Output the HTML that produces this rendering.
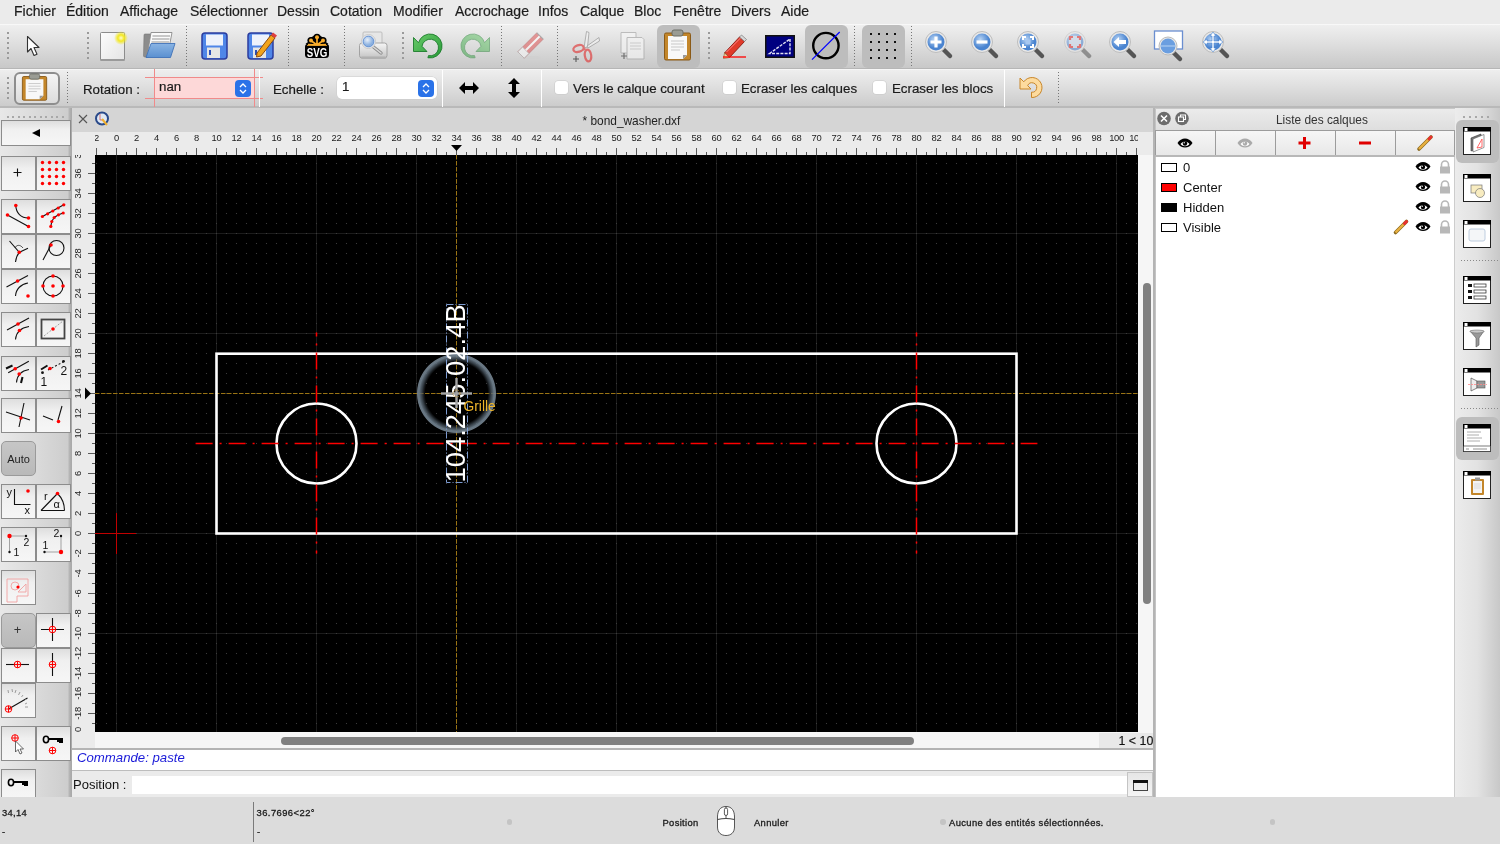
<!DOCTYPE html><html><head><meta charset="utf-8"><style>

*{box-sizing:border-box}
body{-webkit-font-smoothing:antialiased;margin:0;width:1500px;height:844px;position:relative;overflow:hidden;background:#ececec;font-family:"Liberation Sans",sans-serif;color:#222}
.a{position:absolute}
.menu span{position:absolute;top:3px;font-size:14px;color:#1c1c1c;white-space:nowrap;-webkit-text-stroke:.2px #1c1c1c}
.grip{position:absolute;width:2px;background:repeating-linear-gradient(#9a9a9a 0 2px,transparent 2px 5px)}
.sep{position:absolute;width:1px;background:repeating-linear-gradient(#777 0 1px,transparent 1px 3px)}
.lbtn{position:absolute;width:35px;height:35px;border:1px solid #9e9e9e;background:linear-gradient(#fafafa,#e6e6e6)}
.lbl{position:absolute;font-size:13.3px;color:#1a1a1a;white-space:nowrap;-webkit-text-stroke:.2px #1a1a1a}

</style></head><body><div id="root" style="position:absolute;left:0;top:0;width:1500px;height:844px;overflow:hidden;will-change:transform">
<div class="a menu" style="left:0;top:0;width:1500px;height:24px;background:#ebebeb">
<span style="left:14px">Fichier</span>
<span style="left:66px">Édition</span>
<span style="left:120px">Affichage</span>
<span style="left:190px">Sélectionner</span>
<span style="left:277px">Dessin</span>
<span style="left:330px">Cotation</span>
<span style="left:393px">Modifier</span>
<span style="left:455px">Accrochage</span>
<span style="left:538px">Infos</span>
<span style="left:580px">Calque</span>
<span style="left:634px">Bloc</span>
<span style="left:673px">Fenêtre</span>
<span style="left:731px">Divers</span>
<span style="left:781px">Aide</span>
</div>
<div class="a" style="left:0;top:24px;width:1500px;height:45px;background:linear-gradient(#efefef,#e4e4e4 30%,#c8c8c8);border-top:1px solid #f8f8f8;border-bottom:1px solid #b6b6b6"></div>
<div class="a" style="left:0;top:69px;width:1500px;height:39px;background:linear-gradient(#eeeeee,#e2e2e2 35%,#cacaca);border-top:1px solid #f6f6f6"></div><div class="a" style="left:0;top:106px;width:1500px;height:2px;background:#b9b9b9"></div>
<div class="grip" style="left:7px;top:32px;height:27px"></div><div class="grip" style="left:87px;top:32px;height:27px"></div><div class="grip" style="left:402px;top:32px;height:27px"></div><div class="grip" style="left:708px;top:32px;height:27px"></div><div class="sep" style="left:186px;top:26px;height:41px"></div><div class="sep" style="left:288px;top:26px;height:41px"></div><div class="sep" style="left:344px;top:26px;height:41px"></div><div class="sep" style="left:501px;top:26px;height:41px"></div><div class="sep" style="left:557px;top:26px;height:41px"></div><div class="sep" style="left:854px;top:26px;height:41px"></div><div class="sep" style="left:911px;top:26px;height:41px"></div><div class="a" style="left:657px;top:25px;width:43px;height:43px;border-radius:6px;background:#bdbdbd"></div><div class="a" style="left:805px;top:25px;width:43px;height:43px;border-radius:6px;background:#bdbdbd"></div><div class="a" style="left:862px;top:25px;width:43px;height:43px;border-radius:6px;background:#bdbdbd"></div><svg class="a" style="left:26px;top:35px;overflow:visible" width="16" height="23" viewBox="0 0 16 23"><path d="M1.5 1.5 L1.5 17 L5 13.5 L8 20.5 L11 19.2 L8 12.5 L13 12.5 Z" fill="#fff" stroke="#333" stroke-width="1.1" stroke-linejoin="round"/></svg><svg class="a" style="left:99px;top:31px;overflow:visible" width="30" height="31" viewBox="0 0 30 31"><defs><radialGradient id="glow"><stop offset="0" stop-color="#fffbd0"/><stop offset=".45" stop-color="#f3e820"/><stop offset="1" stop-color="#f3e820" stop-opacity="0"/></radialGradient><linearGradient id="pg" x1="0" y1="0" x2="1" y2="1"><stop offset="0" stop-color="#fdfdfd"/><stop offset="1" stop-color="#e4e4e4"/></linearGradient></defs><rect x="1.5" y="1.5" width="24" height="28" rx="1" fill="url(#pg)" stroke="#8c8c8c"/><rect x="1.5" y="28" width="24" height="2" fill="#9a9a9a"/><circle cx="22" cy="7" r="7" fill="url(#glow)"/></svg><svg class="a" style="left:142px;top:31px;overflow:visible" width="34" height="28" viewBox="0 0 34 28"><defs><linearGradient id="fg" x1="0" y1="0" x2="0" y2="1"><stop offset="0" stop-color="#8ab4e4"/><stop offset="1" stop-color="#5a90d0"/></linearGradient></defs><path d="M2 4 Q2 3 3 3 L10 3 L6 26 L3 26 Q1.5 26 1.5 25 Z" fill="#8c8c8c" stroke="#777" stroke-width=".6"/><path d="M9 1.5 L30 1.5 L27 17 L5 26 Z" fill="#fbfbfb" stroke="#8a8a8a" stroke-width=".9"/><path d="M10.5 5 L28 5 M10 8 L27.5 8 M9.5 11 L27 11" stroke="#b8b8b8" stroke-width="1.4"/><path d="M9 12.5 L33 12.5 L28.5 26.5 L4 26.5 Z" fill="url(#fg)" stroke="#3f72b8" stroke-width=".9" stroke-linejoin="round"/></svg><svg class="a" style="left:201px;top:32px;overflow:visible" width="28" height="28" viewBox="0 0 28 28"><rect x="1" y="1" width="25" height="26" rx="3" fill="#4f86e8" stroke="#2b3d9e" stroke-width="1.5"/><rect x="5" y="2.5" width="17" height="11" fill="#eef2fb"/><rect x="6" y="15.5" width="13" height="10.5" fill="#e6e6e6"/><rect x="8" y="18" width="2" height="5" fill="#2b4fb8"/></svg><svg class="a" style="left:247px;top:31px;overflow:visible" width="30" height="30" viewBox="0 0 30 30"><g transform="translate(0,1)"><rect x="1" y="1" width="25" height="26" rx="3" fill="#4f86e8" stroke="#2b3d9e" stroke-width="1.5"/><rect x="5" y="2.5" width="17" height="11" fill="#eef2fb"/><rect x="6" y="15.5" width="13" height="10.5" fill="#e6e6e6"/><rect x="8" y="18" width="2" height="5" fill="#2b4fb8"/></g><path d="M10 22 L24 4 L28 7 L14 25 L9.5 26 Z" fill="#f3a41c" stroke="#8a4a10" stroke-width="1"/><path d="M24 4 L26 1.5 L30 4.5 L28 7 Z" fill="#e04040"/></svg><svg class="a" style="left:304px;top:33px;overflow:visible" width="27" height="27" viewBox="0 0 27 27"><g fill="#000"><path d="M4 11 L6 5 L13 1 L20 5 L22 11 Z"/><circle cx="13" cy="4.3" r="3.6"/><circle cx="7" cy="7.5" r="3.6"/><circle cx="19" cy="7.5" r="3.6"/><path d="M1.5 11 Q3 8.5 7 9 L19 9 Q23 8.5 24.5 11 Z"/></g><rect x="1" y="10.5" width="24" height="14.5" rx="3.5" fill="#000"/><g fill="#f8ac2c" stroke="#f8ac2c"><circle cx="13" cy="4.3" r="2" stroke="none"/><circle cx="7" cy="7.5" r="2" stroke="none"/><circle cx="19" cy="7.5" r="2" stroke="none"/><path d="M13 12 L13 5 M13 12 L7.5 8 M13 12 L18.5 8 M13 12 L4 11.5 M13 12 L22 11.5" stroke-width="1.7" fill="none"/><path d="M3 12 Q13 10.5 23 12 L23 12.8 L3 12.8 Z" stroke="none"/></g><text x="0" y="0" transform="translate(13,24) scale(0.78,1)" text-anchor="middle" font-family="Liberation Sans" font-weight="bold" font-size="12.5" fill="#fff">SVG</text></svg><svg class="a" style="left:358px;top:31px;overflow:visible" width="31" height="30" viewBox="0 0 31 30"><defs><linearGradient id="prg" x1="0" y1="0" x2="0" y2="1"><stop offset="0" stop-color="#f6f6f6"/><stop offset="1" stop-color="#c4c4c4"/></linearGradient><radialGradient id="lens" cx=".4" cy=".35"><stop offset="0" stop-color="#e8f0fa"/><stop offset="1" stop-color="#8ab0e0"/></radialGradient></defs><rect x="5" y="1" width="19" height="14" rx="1" fill="#e6e6e6" stroke="#b4b4b4" stroke-width=".8"/><rect x="1.5" y="12" width="27.5" height="15" rx="2.5" fill="url(#prg)" stroke="#9c9c9c" stroke-width=".9"/><rect x="3" y="25.5" width="25" height="2.5" rx="1" fill="#b0b0b0"/><path d="M15.5 16 L23 22" stroke="#8c8c8c" stroke-width="3.4" stroke-linecap="round"/><path d="M15.5 16 L23 22" stroke="#d8d8d8" stroke-width="1.6" stroke-linecap="round"/><circle cx="10.5" cy="10.5" r="7" fill="#f0f0f0" stroke="#c8c8c8" stroke-width="1"/><circle cx="10.5" cy="10.5" r="5.4" fill="url(#lens)" stroke="#5a8ad0" stroke-width=".9"/></svg><svg class="a" style="left:412px;top:32px;overflow:visible" width="32" height="28" viewBox="0 0 32 28"><defs><linearGradient id="ug" x1="0" y1="0" x2="1" y2="1"><stop offset="0" stop-color="#6acb6a"/><stop offset="1" stop-color="#279a37"/></linearGradient></defs><path d="M1.5 5.5 L6.5 10.7 A12 12 0 1 1 15.9 25.8 L16.5 23.6 A8.3 8.3 0 1 0 10 14.3 L15 19.5 L1.5 19.5 Z" fill="url(#ug)" stroke="#1d7d2d" stroke-width="0.9" stroke-linejoin="round"/></svg><div class="a" style="left:459px;top:32px;width:32px;height:28px;opacity:.5;transform:scaleX(-1)"><svg class="a" style="left:0px;top:0px;overflow:visible" width="32" height="28" viewBox="0 0 32 28"><defs><linearGradient id="ug2" x1="0" y1="0" x2="1" y2="1"><stop offset="0" stop-color="#6acb6a"/><stop offset="1" stop-color="#279a37"/></linearGradient></defs><path d="M1.5 5.5 L6.5 10.7 A12 12 0 1 1 15.9 25.8 L16.5 23.6 A8.3 8.3 0 1 0 10 14.3 L15 19.5 L1.5 19.5 Z" fill="url(#ug2)" stroke="#1d7d2d" stroke-width="0.9" stroke-linejoin="round"/></svg></div><svg class="a" style="left:516px;top:32px;overflow:visible" width="30" height="28" viewBox="0 0 30 28"><g opacity="0.62"><ellipse cx="14" cy="25.5" rx="11" ry="1.6" fill="#cfcfcf"/><path d="M1.8 19.8 L20.8 0.8 L27.2 7.2 L8.2 26.2 Z" fill="#e06464" stroke="#b04848" stroke-width=".7" stroke-linejoin="round"/><path d="M1.8 19.8 L6.6 15.1 L12.9 21.4 L8.2 26.2 Z" fill="#f6f6f6" stroke="#9a9a9a" stroke-width=".7"/><path d="M9.8 18.2 L24 4" stroke="#fff" stroke-width="2"/><path d="M20.8 0.8 L27.2 7.2" stroke="#888" stroke-width="1.2"/></g></svg><svg class="a" style="left:571px;top:31px;overflow:visible" width="32" height="32" viewBox="0 0 32 32"><g opacity="0.62"><path d="M13 17 L15.5 0.5 L18 1.5 L16.5 16 Z" fill="#f4f4f4" stroke="#777" stroke-width=".8"/><path d="M16 15 L28 6.5 L28.5 10 L17 17 Z" fill="#f4f4f4" stroke="#777" stroke-width=".8"/><ellipse cx="7.5" cy="17.5" rx="5.3" ry="3.3" transform="rotate(-18 7.5 17.5)" fill="none" stroke="#e03030" stroke-width="2.2"/><ellipse cx="17" cy="24.5" rx="3.2" ry="6" transform="rotate(-8 17 24.5)" fill="none" stroke="#e03030" stroke-width="2.2"/><path d="M12 19 L14.5 17.5" stroke="#e03030" stroke-width="2"/><path d="M2 28 H8 M5 25 V31" stroke="#111" stroke-width="1.1"/></g></svg><svg class="a" style="left:616px;top:31px;overflow:visible" width="32" height="30" viewBox="0 0 32 30"><g opacity="0.55"><path d="M5 1.5 H20 V22 H5 Z" fill="#fafafa" stroke="#999"/><path d="M11 6.5 H26 L28 8.5 V28 H11 Z" fill="#fafafa" stroke="#999"/><path d="M14 12 H25 M14 15 H25 M14 18 H25" stroke="#bbb"/><path d="M5 25 H11 M8 22 V28" stroke="#222" stroke-width="1.2"/></g></svg><svg class="a" style="left:663px;top:29px;overflow:visible" width="30" height="33" viewBox="0 0 30 33"><rect x="1.5" y="4" width="26" height="27" rx="1.5" fill="#c3862a" stroke="#8a5a18"/><path d="M5 7 H24 V26 L20 30 H5 Z" fill="#f8f8f8"/><path d="M24 26 L20 30 L20 26 Z" fill="#999"/><rect x="9" y="1" width="11" height="6" rx="2" fill="#9a9c94" stroke="#6c6e66"/><path d="M8 12 H21 M8 15 H21 M8 18 H21 M8 21 H17" stroke="#c8c8c8"/></svg><svg class="a" style="left:722px;top:33px;overflow:visible" width="26" height="26" viewBox="0 0 26 26"><path d="M2.5 20 L17.5 4 L22.5 8.5 L7.5 24.5 Z" fill="#e03a2a" stroke="#8a1a10" stroke-width=".9" stroke-linejoin="round"/><path d="M4.5 19 L19 4.5" stroke="#f88" stroke-width="1"/><path d="M2.5 20 L7.5 24.5 L1.5 25.5 Z" fill="#f2cfa0" stroke="#8a5a20" stroke-width=".6"/><path d="M17.5 4 L19.5 2 L24.5 6.5 L22.5 8.5 Z" fill="#d8d8d8" stroke="#777" stroke-width=".7"/><path d="M1 24 H24" stroke="#f00" stroke-width="1.3"/></svg><svg class="a" style="left:765px;top:35px;overflow:visible" width="30" height="23" viewBox="0 0 30 23"><rect x=".75" y=".75" width="28.5" height="21.5" fill="#000080" stroke="#111" stroke-width="1.5"/><path d="M4.5 18.5 L25 4 L25 18.5 Z" fill="none" stroke="#e0e0f0" stroke-width="1.4" stroke-dasharray="3 1.2"/></svg><svg class="a" style="left:810px;top:30px;overflow:visible" width="34" height="32" viewBox="0 0 34 32"><circle cx="15.9" cy="15.6" r="12.7" fill="none" stroke="#000" stroke-width="2.4"/><path d="M2 29.7 L29.7 2" stroke="#00f" stroke-width="1.2"/></svg><svg class="a" style="left:870px;top:33px;overflow:visible" width="28" height="28" viewBox="0 0 28 28"><rect x="0" y="0" width="2" height="2" fill="#111"/><rect x="0" y="8" width="2" height="2" fill="#111"/><rect x="0" y="16" width="2" height="2" fill="#111"/><rect x="0" y="24" width="2" height="2" fill="#111"/><rect x="8" y="0" width="2" height="2" fill="#111"/><rect x="8" y="8" width="2" height="2" fill="#111"/><rect x="8" y="16" width="2" height="2" fill="#111"/><rect x="8" y="24" width="2" height="2" fill="#111"/><rect x="16" y="0" width="2" height="2" fill="#111"/><rect x="16" y="8" width="2" height="2" fill="#111"/><rect x="16" y="16" width="2" height="2" fill="#111"/><rect x="16" y="24" width="2" height="2" fill="#111"/><rect x="24" y="0" width="2" height="2" fill="#111"/><rect x="24" y="8" width="2" height="2" fill="#111"/><rect x="24" y="16" width="2" height="2" fill="#111"/><rect x="24" y="24" width="2" height="2" fill="#111"/></svg><svg class="a" style="left:924px;top:30px;overflow:visible" width="32" height="32" viewBox="0 0 32 32"><defs><radialGradient id="mg936" cx=".4" cy=".35"><stop offset="0" stop-color="#b8d4f4"/><stop offset="1" stop-color="#4a84d0"/></radialGradient></defs><path d="M18 18 L26 26" stroke="#555" stroke-width="4.5" stroke-linecap="round"/><circle cx="12" cy="12" r="10.5" fill="#e8e8e8" stroke="#bdbdbd" stroke-width="1"/><circle cx="12" cy="12" r="8.5" fill="url(#mg936)"/><path d="M12 6.5 V17.5 M6.5 12 H17.5" stroke="#fff" stroke-width="3.2"/></svg><svg class="a" style="left:970px;top:30px;overflow:visible" width="32" height="32" viewBox="0 0 32 32"><defs><radialGradient id="mg982" cx=".4" cy=".35"><stop offset="0" stop-color="#b8d4f4"/><stop offset="1" stop-color="#4a84d0"/></radialGradient></defs><path d="M18 18 L26 26" stroke="#555" stroke-width="4.5" stroke-linecap="round"/><circle cx="12" cy="12" r="10.5" fill="#e8e8e8" stroke="#bdbdbd" stroke-width="1"/><circle cx="12" cy="12" r="8.5" fill="url(#mg982)"/><path d="M6.5 12 H17.5" stroke="#fff" stroke-width="3.2"/></svg><svg class="a" style="left:1016px;top:30px;overflow:visible" width="32" height="32" viewBox="0 0 32 32"><defs><radialGradient id="mg1028" cx=".4" cy=".35"><stop offset="0" stop-color="#b8d4f4"/><stop offset="1" stop-color="#4a84d0"/></radialGradient></defs><path d="M18 18 L26 26" stroke="#555" stroke-width="4.5" stroke-linecap="round"/><circle cx="12" cy="12" r="10.5" fill="#e8e8e8" stroke="#bdbdbd" stroke-width="1"/><circle cx="12" cy="12" r="8.5" fill="url(#mg1028)"/><path d="M7 10 V7 H10 M14 7 H17 V10 M17 14 V17 H14 M10 17 H7 V14" fill="none" stroke="#fff" stroke-width="2"/><rect x="9.5" y="9.5" width="5" height="5" fill="#a8c8f0"/></svg><div class="a" style="left:1063px;top:30px;width:32px;height:32px;opacity:.55"><svg class="a" style="left:0px;top:0px;overflow:visible" width="32" height="32" viewBox="0 0 32 32"><defs><radialGradient id="mg12" cx=".4" cy=".35"><stop offset="0" stop-color="#b8d4f4"/><stop offset="1" stop-color="#4a84d0"/></radialGradient></defs><path d="M18 18 L26 26" stroke="#555" stroke-width="4.5" stroke-linecap="round"/><circle cx="12" cy="12" r="10.5" fill="#e8e8e8" stroke="#bdbdbd" stroke-width="1"/><circle cx="12" cy="12" r="8.5" fill="url(#mg12)"/><rect x="6" y="6" width="12" height="12" fill="#c8d8ee"/><path d="M7 10 V7 H10 M14 7 H17 V10 M17 14 V17 H14 M10 17 H7 V14" fill="none" stroke="#e02020" stroke-width="2.2"/></svg></div><svg class="a" style="left:1108px;top:30px;overflow:visible" width="32" height="32" viewBox="0 0 32 32"><defs><radialGradient id="mg1120" cx=".4" cy=".35"><stop offset="0" stop-color="#b8d4f4"/><stop offset="1" stop-color="#4a84d0"/></radialGradient></defs><path d="M18 18 L26 26" stroke="#555" stroke-width="4.5" stroke-linecap="round"/><circle cx="12" cy="12" r="10.5" fill="#e8e8e8" stroke="#bdbdbd" stroke-width="1"/><circle cx="12" cy="12" r="8.5" fill="url(#mg1120)"/><path d="M5.5 12 L11 7 V10 H18 V14 H11 V17 Z" fill="#fff"/></svg><svg class="a" style="left:1153px;top:30px;overflow:visible" width="32" height="32" viewBox="0 0 32 32"><rect x="1.5" y="1" width="28" height="18" fill="#fff" stroke="#6a8ed0" stroke-width="1.3"/><path d="M20 22 L27 29" stroke="#555" stroke-width="4.5" stroke-linecap="round"/><circle cx="15" cy="16" r="9" fill="#e8e8e8" stroke="#bbb"/><circle cx="15" cy="16" r="7.5" fill="#6a9ee0"/><path d="M8 16 H22" stroke="#b8d4f4" stroke-width="1"/></svg><svg class="a" style="left:1201px;top:30px;overflow:visible" width="32" height="32" viewBox="0 0 32 32"><defs><radialGradient id="mg1213" cx=".4" cy=".35"><stop offset="0" stop-color="#b8d4f4"/><stop offset="1" stop-color="#4a84d0"/></radialGradient></defs><path d="M18 18 L26 26" stroke="#555" stroke-width="4.5" stroke-linecap="round"/><circle cx="12" cy="12" r="10.5" fill="#e8e8e8" stroke="#bdbdbd" stroke-width="1"/><circle cx="12" cy="12" r="8.5" fill="url(#mg1213)"/><path d="M12 2 L15 6 H13 V11 H18 V9 L22 12 L18 15 V13 H13 V18 H15 L12 22 L9 18 H11 V13 H6 V15 L2 12 L6 9 V11 H11 V6 H9 Z" fill="#fff" stroke="#4a84d0" stroke-width=".6"/></svg>
<div class="grip" style="left:7px;top:77px;height:24px"></div><div class="sep" style="left:67px;top:72px;height:33px"></div><div class="sep" style="left:1058px;top:72px;height:33px"></div><div class="a" style="left:14px;top:72px;width:46px;height:33px;border:2px solid #8e8e8e;border-radius:6px;background:linear-gradient(#f4f4f4,#dcdcdc)"></div><svg class="a" style="left:21px;top:73px;overflow:visible" width="28" height="29" preserveAspectRatio="none" viewBox="0 0 30 33"><rect x="1.5" y="4" width="26" height="27" rx="1.5" fill="#c3862a" stroke="#8a5a18"/><path d="M5 7 H24 V26 L20 30 H5 Z" fill="#f8f8f8"/><path d="M24 26 L20 30 L20 26 Z" fill="#999"/><rect x="9" y="1" width="11" height="6" rx="2" fill="#9a9c94" stroke="#6c6e66"/><path d="M8 12 H21 M8 15 H21 M8 18 H21 M8 21 H17" stroke="#c8c8c8"/></svg><div class="lbl" style="left:83px;top:81.8px">Rotation :</div><div class="a" style="left:154px;top:77px;width:101px;height:22px;border-radius:5px;background:#fdd8d8"></div><div class="a" style="left:145px;top:77px;width:118px;height:1px;background:#f08a8a"></div><div class="a" style="left:145px;top:98px;width:118px;height:1px;background:#f08a8a"></div><div class="a" style="left:154px;top:69px;width:1px;height:38px;background:#f08a8a"></div><div class="a" style="left:254px;top:69px;width:1px;height:38px;background:#f08a8a"></div><div class="lbl" style="left:159px;top:79px">nan</div><div class="a" style="left:235px;top:80px;width:16px;height:17px;border-radius:4px;background:#2a72e8"></div><svg class="a" style="left:235px;top:80px;overflow:visible" width="16" height="17" viewBox="0 0 16 17"><path d="M5 7 L8 4 L11 7 M5 10 L8 13 L11 10" fill="none" stroke="#fff" stroke-width="1.3"/></svg><div class="a" style="left:259px;top:70px;width:1px;height:37px;background:#fff"></div><div class="lbl" style="left:273px;top:81.8px">Echelle :</div><div class="a" style="left:337px;top:77px;width:100px;height:22px;border-radius:5px;background:#fff;box-shadow:0 0 0 .5px #ccc"></div><div class="lbl" style="left:342px;top:79px">1</div><div class="a" style="left:418px;top:80px;width:16px;height:17px;border-radius:4px;background:#2a72e8"></div><svg class="a" style="left:418px;top:80px;overflow:visible" width="16" height="17" viewBox="0 0 16 17"><path d="M5 7 L8 4 L11 7 M5 10 L8 13 L11 10" fill="none" stroke="#fff" stroke-width="1.3"/></svg><div class="a" style="left:442px;top:70px;width:1px;height:37px;background:#fff"></div><svg class="a" style="left:458px;top:80px;overflow:visible" width="22" height="16" viewBox="0 0 22 16"><path d="M1 8 L7 2 V6 H15 V2 L21 8 L15 14 V10 H7 V14 Z" fill="#000"/></svg><svg class="a" style="left:506px;top:77px;overflow:visible" width="16" height="22" viewBox="0 0 16 22"><path d="M8 1 L14 7 H10 V15 H14 L8 21 L2 15 H6 V7 H2 Z" fill="#000"/></svg><div class="a" style="left:541px;top:70px;width:1px;height:37px;background:#fff"></div><div class="a" style="left:555px;top:81px;width:13px;height:13px;border-radius:3px;background:#fff;box-shadow:0 0 0 .5px #c8c8c8"></div><div class="lbl" style="left:573px;top:80.5px">Vers le calque courant</div><div class="a" style="left:723px;top:81px;width:13px;height:13px;border-radius:3px;background:#fff;box-shadow:0 0 0 .5px #c8c8c8"></div><div class="lbl" style="left:741px;top:80.5px">Ecraser les calques</div><div class="a" style="left:873px;top:81px;width:13px;height:13px;border-radius:3px;background:#fff;box-shadow:0 0 0 .5px #c8c8c8"></div><div class="lbl" style="left:892px;top:80.5px">Ecraser les blocs</div><div class="a" style="left:1004px;top:70px;width:1px;height:37px;background:#fff"></div><svg class="a" style="left:1017px;top:75px;overflow:visible" width="28" height="26" viewBox="0 0 28 26"><path d="M3 3 L6.79 6.79 A10 10 0 1 1 14.5 22.5 L14.5 17.17 A4.7 4.7 0 1 0 10.67 10.67 L14 14 L3 14 Z" fill="#fddb9e" stroke="#c8862a" stroke-width="1" stroke-linejoin="round"/></svg>
<div class="a" style="left:0;top:108px;width:72px;height:689px;background:linear-gradient(90deg,#e8e8e8 0,#dcdcdc 45%,#cdcdcd 94%,#b0b0b0 97%,#a8a8a8 100%)"></div>
<div class="a" style="left:7px;top:116px;width:57px;height:2px;background:repeating-linear-gradient(90deg,#a8a8a8 0 2px,transparent 2px 5.5px)"></div><div class="a" style="left:1px;top:120px;width:70px;height:26px;border:1px solid #8c8c8c;background:linear-gradient(#dedede 0,#f0f0f0 35%,#f6f6f6 100%)"></div><div class="a" style="left:1px;top:156px;width:35px;height:35px;border:1px solid #8c8c8c;background:linear-gradient(#dedede 0,#f0f0f0 35%,#f6f6f6 100%)"></div><div class="a" style="left:36px;top:156px;width:35px;height:35px;border:1px solid #8c8c8c;background:linear-gradient(#dedede 0,#f0f0f0 35%,#f6f6f6 100%)"></div><div class="a" style="left:1px;top:199px;width:35px;height:35px;border:1px solid #8c8c8c;background:linear-gradient(#dedede 0,#f0f0f0 35%,#f6f6f6 100%)"></div><div class="a" style="left:36px;top:199px;width:35px;height:35px;border:1px solid #8c8c8c;background:linear-gradient(#dedede 0,#f0f0f0 35%,#f6f6f6 100%)"></div><div class="a" style="left:1px;top:234px;width:35px;height:35px;border:1px solid #8c8c8c;background:linear-gradient(#dedede 0,#f0f0f0 35%,#f6f6f6 100%)"></div><div class="a" style="left:36px;top:234px;width:35px;height:35px;border:1px solid #8c8c8c;background:linear-gradient(#dedede 0,#f0f0f0 35%,#f6f6f6 100%)"></div><div class="a" style="left:1px;top:269px;width:35px;height:35px;border:1px solid #8c8c8c;background:linear-gradient(#dedede 0,#f0f0f0 35%,#f6f6f6 100%)"></div><div class="a" style="left:36px;top:269px;width:35px;height:35px;border:1px solid #8c8c8c;background:linear-gradient(#dedede 0,#f0f0f0 35%,#f6f6f6 100%)"></div><div class="a" style="left:1px;top:312px;width:35px;height:35px;border:1px solid #8c8c8c;background:linear-gradient(#dedede 0,#f0f0f0 35%,#f6f6f6 100%)"></div><div class="a" style="left:36px;top:312px;width:35px;height:35px;border:1px solid #8c8c8c;background:linear-gradient(#dedede 0,#f0f0f0 35%,#f6f6f6 100%)"></div><div class="a" style="left:1px;top:356px;width:35px;height:35px;border:1px solid #8c8c8c;background:linear-gradient(#dedede 0,#f0f0f0 35%,#f6f6f6 100%)"></div><div class="a" style="left:36px;top:356px;width:35px;height:35px;border:1px solid #8c8c8c;background:linear-gradient(#dedede 0,#f0f0f0 35%,#f6f6f6 100%)"></div><div class="a" style="left:1px;top:398px;width:35px;height:35px;border:1px solid #8c8c8c;background:linear-gradient(#dedede 0,#f0f0f0 35%,#f6f6f6 100%)"></div><div class="a" style="left:36px;top:398px;width:35px;height:35px;border:1px solid #8c8c8c;background:linear-gradient(#dedede 0,#f0f0f0 35%,#f6f6f6 100%)"></div><div class="a" style="left:1px;top:484px;width:35px;height:35px;border:1px solid #8c8c8c;background:linear-gradient(#dedede 0,#f0f0f0 35%,#f6f6f6 100%)"></div><div class="a" style="left:36px;top:484px;width:35px;height:35px;border:1px solid #8c8c8c;background:linear-gradient(#dedede 0,#f0f0f0 35%,#f6f6f6 100%)"></div><div class="a" style="left:1px;top:527px;width:35px;height:35px;border:1px solid #8c8c8c;background:linear-gradient(#dedede 0,#f0f0f0 35%,#f6f6f6 100%)"></div><div class="a" style="left:36px;top:527px;width:35px;height:35px;border:1px solid #8c8c8c;background:linear-gradient(#dedede 0,#f0f0f0 35%,#f6f6f6 100%)"></div><div class="a" style="left:1px;top:613px;width:35px;height:35px;border:1px solid #9a9a9a;border-radius:5px;background:linear-gradient(#c6c6c6,#b9b9b9)"></div><div class="a" style="left:36px;top:613px;width:35px;height:35px;border:1px solid #8c8c8c;background:linear-gradient(#dedede 0,#f0f0f0 35%,#f6f6f6 100%)"></div><div class="a" style="left:1px;top:648px;width:35px;height:35px;border:1px solid #8c8c8c;background:linear-gradient(#dedede 0,#f0f0f0 35%,#f6f6f6 100%)"></div><div class="a" style="left:36px;top:648px;width:35px;height:35px;border:1px solid #8c8c8c;background:linear-gradient(#dedede 0,#f0f0f0 35%,#f6f6f6 100%)"></div><div class="a" style="left:1px;top:726px;width:35px;height:35px;border:1px solid #8c8c8c;background:linear-gradient(#dedede 0,#f0f0f0 35%,#f6f6f6 100%)"></div><div class="a" style="left:36px;top:726px;width:35px;height:35px;border:1px solid #8c8c8c;background:linear-gradient(#dedede 0,#f0f0f0 35%,#f6f6f6 100%)"></div><div class="a" style="left:1px;top:441px;width:35px;height:35px;border:1px solid #9a9a9a;border-radius:5px;background:linear-gradient(#c6c6c6,#b9b9b9)"></div><div class="a" style="left:1px;top:570px;width:35px;height:35px;border:1px solid #8c8c8c;background:linear-gradient(#dedede 0,#f0f0f0 35%,#f6f6f6 100%)"></div><div class="a" style="left:1px;top:683px;width:35px;height:35px;border:1px solid #8c8c8c;background:linear-gradient(#dedede 0,#f0f0f0 35%,#f6f6f6 100%)"></div><div class="a" style="left:1px;top:769px;width:35px;height:30px;border:1px solid #8c8c8c;background:linear-gradient(#dedede 0,#f0f0f0 35%,#f6f6f6 100%)"></div>
<svg class="a" style="left:0;top:108px" width="72" height="689" viewBox="0 108 72 689"><g fill="none" stroke="#111" stroke-width="1.1"><path d="M32 133 L40 129 V137 Z" fill="#000" stroke="none"/><path d="M13.5 172.5 H21.5 M17.5 168.5 V176.5"/></g><circle cx="42.5" cy="162.5" r="1.7" fill="#f00"/><circle cx="42.5" cy="169.5" r="1.7" fill="#f00"/><circle cx="42.5" cy="176.5" r="1.7" fill="#f00"/><circle cx="42.5" cy="183.5" r="1.7" fill="#f00"/><circle cx="49.5" cy="162.5" r="1.7" fill="#f00"/><circle cx="49.5" cy="169.5" r="1.7" fill="#f00"/><circle cx="49.5" cy="176.5" r="1.7" fill="#f00"/><circle cx="49.5" cy="183.5" r="1.7" fill="#f00"/><circle cx="56.5" cy="162.5" r="1.7" fill="#f00"/><circle cx="56.5" cy="169.5" r="1.7" fill="#f00"/><circle cx="56.5" cy="176.5" r="1.7" fill="#f00"/><circle cx="56.5" cy="183.5" r="1.7" fill="#f00"/><circle cx="63.5" cy="162.5" r="1.7" fill="#f00"/><circle cx="63.5" cy="169.5" r="1.7" fill="#f00"/><circle cx="63.5" cy="176.5" r="1.7" fill="#f00"/><circle cx="63.5" cy="183.5" r="1.7" fill="#f00"/><g fill="none" stroke="#111" stroke-width="1.1"><path d="M7.5 215 L28.5 226.5"/><path d="M15.8 205.5 C16 213 21 218 28.5 218"/><path d="M42.5 216.5 L63.8 204.8 M50.8 226.4 L51.8 221.5 L54.2 217.5 L58.5 214.8 L63.2 213"/><path d="M9.5 241 L19.3 252.3 L28 248.3 M19.3 252.3 C17 255 16 258 15.5 262"/><path d="M15 248 C16 245 20 244 23 248" stroke-width=".7"/><circle cx="56.5" cy="248" r="7.5"/><path d="M43 260 L51 245"/><path d="M6.5 287 L28 275.5"/><path d="M15.5 296 C16 289 21 284 28 283"/><circle cx="53" cy="286" r="10"/><path d="M7 330 L29 318"/><path d="M15.5 339.5 C16 334 19 328 29 326.5"/><rect x="41.5" y="319.5" width="23" height="19" stroke="#444" stroke-width="1.8"/><path d="M44 336 L63 321" stroke="#888" stroke-width=".8" stroke-dasharray="2 1.5"/><path d="M8.2 372.7 L28.8 361.2"/><path d="M16.5 382.5 C17 376 20 371 29 369.5"/><path d="M6 368.5 L12.5 365.5" stroke-width="2"/><path d="M21 383 L22.5 377" stroke-width="2"/><path d="M48 370 L64 361.5" stroke-dasharray="2 2"/><path d="M41 369.5 L47.5 365.5" stroke-width="2"/></g><text x="40.5" y="385.5" font-family="Liberation Sans" font-size="12" fill="#111">1</text><text x="60.5" y="375" font-family="Liberation Sans" font-size="12" fill="#111">2</text><circle cx="63.5" cy="361.3" r="1.4" fill="#111"/><circle cx="42.5" cy="372.7" r="1.4" fill="#111"/><circle cx="15.8" cy="205.5" r="1.8" fill="#f00"/><circle cx="28.5" cy="218" r="1.8" fill="#f00"/><circle cx="7.5" cy="215" r="1.8" fill="#f00"/><circle cx="28.5" cy="226.5" r="1.8" fill="#f00"/><circle cx="42.4" cy="216.5" r="1.6" fill="#f00"/><circle cx="47.6" cy="213.8" r="1.6" fill="#f00"/><circle cx="52.8" cy="211" r="1.6" fill="#f00"/><circle cx="58.2" cy="208" r="1.6" fill="#f00"/><circle cx="63.8" cy="204.8" r="1.6" fill="#f00"/><circle cx="50.8" cy="226.4" r="1.6" fill="#f00"/><circle cx="51.8" cy="221.5" r="1.6" fill="#f00"/><circle cx="54.2" cy="217.5" r="1.6" fill="#f00"/><circle cx="58.5" cy="214.8" r="1.6" fill="#f00"/><circle cx="63.2" cy="213" r="1.6" fill="#f00"/><circle cx="19.3" cy="252.3" r="1.8" fill="#f00"/><circle cx="51" cy="245" r="1.8" fill="#f00"/><circle cx="17.6" cy="281" r="1.8" fill="#f00"/><circle cx="28" cy="296" r="1.8" fill="#f00"/><circle cx="53" cy="276" r="1.8" fill="#f00"/><circle cx="43" cy="286" r="1.8" fill="#f00"/><circle cx="63" cy="286" r="1.8" fill="#f00"/><circle cx="53" cy="296" r="1.8" fill="#f00"/><circle cx="53" cy="286" r="1.8" fill="#f00"/><circle cx="18" cy="324" r="1.8" fill="#f00"/><circle cx="19.5" cy="330.5" r="1.8" fill="#f00"/><circle cx="53" cy="329" r="1.8" fill="#f00"/><circle cx="15.2" cy="368.8" r="1.8" fill="#f00"/><circle cx="19.2" cy="374" r="1.8" fill="#f00"/><circle cx="50" cy="368.5" r="1.8" fill="#f00"/><g fill="none" stroke="#111" stroke-width="1.1"><path d="M6 412 L30 420 M19 427 L24 403"/><path d="M43 416 L53 420 M58 420 L62 406"/></g><circle cx="21" cy="418" r="1.8" fill="#f00"/><circle cx="58.5" cy="421.5" r="1.8" fill="#f00"/><text x="18.5" y="462.5" text-anchor="middle" font-family="Liberation Sans" font-size="11" fill="#222">Auto</text><g fill="none" stroke="#111" stroke-width="1.1"><path d="M14.5 489 V504.5 H30.5"/><path d="M41 510.5 L57.5 493.5 M41 510.5 H64.5 M57.5 493.5 C62 498 64.5 504 64.5 510.5"/></g><text x="6.5" y="496" font-family="Liberation Sans" font-size="11" fill="#111">y</text><text x="24.5" y="514" font-family="Liberation Sans" font-size="11" fill="#111">x</text><text x="44" y="500" font-family="Liberation Sans" font-size="11" fill="#111">r</text><text x="53.5" y="507.5" font-family="Liberation Sans" font-size="11" fill="#111">α</text><circle cx="28" cy="491" r="1.8" fill="#f00"/><circle cx="57.5" cy="493.5" r="1.8" fill="#f00"/><g fill="none" stroke="#999" stroke-width=".9"><path d="M9.5 552 V536 H26"/><path d="M44.5 552 H61 V536"/></g><text x="23.5" y="546" font-family="Liberation Sans" font-size="10.5" fill="#111">2</text><text x="13.5" y="555.5" font-family="Liberation Sans" font-size="10.5" fill="#111">1</text><text x="53.5" y="536.5" font-family="Liberation Sans" font-size="10.5" fill="#111">2</text><text x="42.5" y="549" font-family="Liberation Sans" font-size="10.5" fill="#111">1</text><circle cx="9.5" cy="536" r="2.2" fill="#f00"/><circle cx="26" cy="536" r="1.2" fill="#111"/><circle cx="9.5" cy="552" r="1.2" fill="#111"/><circle cx="61" cy="536" r="1.2" fill="#111"/><circle cx="44.5" cy="552" r="1.2" fill="#111"/><circle cx="61" cy="552" r="2.2" fill="#f00"/><g fill="none" stroke="#f2a0a0" stroke-width=".9"><path d="M7 579 H28 V596 H17 V602 H7 Z"/><circle cx="15" cy="586" r="4"/><path d="M18 592 L26 584 V592 Z"/></g><circle cx="18" cy="587" r="1.6" fill="#f00"/><text x="17.5" y="634" text-anchor="middle" font-family="Liberation Sans" font-size="13" fill="#333">+</text><g stroke="#111" stroke-width="1.1"><path d="M41 629.5 H64 M52.5 618 V641"/><path d="M6 664.5 H29"/><path d="M52.5 653 V676"/><path d="M8.5 709 L27.5 698"/></g><g stroke="#888" stroke-width=".8"><path d="M8 690 L8.5 693 M12 689 L12.5 692 M16 690 L15 693 M20 692 L18.5 695 M23 695 L21.5 697 M26 699 L24.5 700.5 M27 703 L25 704 M28 707 H25"/></g><circle cx="52.5" cy="629.5" r="3.3" fill="none" stroke="#f00" stroke-width="1"/><path d="M49.2 629.5 H55.8 M52.5 626.2 V632.8" stroke="#f00" stroke-width="1"/><circle cx="17.5" cy="664.5" r="3.3" fill="none" stroke="#f00" stroke-width="1"/><path d="M14.2 664.5 H20.8 M17.5 661.2 V667.8" stroke="#f00" stroke-width="1"/><circle cx="52.5" cy="664.5" r="3.3" fill="none" stroke="#f00" stroke-width="1"/><path d="M49.2 664.5 H55.8 M52.5 661.2 V667.8" stroke="#f00" stroke-width="1"/><circle cx="8.5" cy="709" r="3.3" fill="none" stroke="#f00" stroke-width="1"/><path d="M5.2 709 H11.8 M8.5 705.7 V712.3" stroke="#f00" stroke-width="1"/><circle cx="15" cy="738" r="3.3" fill="none" stroke="#f00" stroke-width="1"/><path d="M11.7 738 H18.3 M15 734.7 V741.3" stroke="#f00" stroke-width="1"/><path d="M15.5 741 V752 L18 749.5 L20 754 L22 753 L20 749 H23.5 Z" fill="#fff" stroke="#444" stroke-width=".8"/><g transform="translate(43,736)"><ellipse cx="3" cy="3.5" rx="2.6" ry="3.2" fill="none" stroke="#000" stroke-width="1.6"/><path d="M5.5 3 H19 V7 M15 3 V6 M17 3 V7" fill="none" stroke="#000" stroke-width="2"/></g><circle cx="52.5" cy="750.5" r="3.3" fill="none" stroke="#f00" stroke-width="1"/><path d="M49.2 750.5 H55.8 M52.5 747.2 V753.8" stroke="#f00" stroke-width="1"/><g transform="translate(8,779)"><ellipse cx="3" cy="3.5" rx="2.6" ry="3.2" fill="none" stroke="#000" stroke-width="1.6"/><path d="M5.5 3 H19 V7 M15 3 V6 M17 3 V7" fill="none" stroke="#000" stroke-width="2"/></g></svg>
<div class="a" style="left:72px;top:108px;width:1083px;height:24px;background:#d5d5d5"></div>
<div class="a" style="left:72px;top:132px;width:1081px;height:23px;background:#ebebeb"></div>
<div class="a" style="left:72px;top:155px;width:23px;height:577px;background:#ebebeb"></div>
<div class="a" style="left:95px;top:155px;width:1043px;height:577px;background:#000"></div>
<div class="a" style="left:1138px;top:155px;width:15px;height:577px;background:#f6f6f6"></div>
<div class="a" style="left:95px;top:732px;width:1058px;height:16px;background:#f6f6f6"></div>
<div class="a" style="left:72px;top:732px;width:23px;height:16px;background:#ebebeb"></div>
<div class="a" style="left:1153px;top:108px;width:2px;height:689px;background:#b4b4b4"></div>
<svg class="a" style="left:72px;top:132px" width="1081" height="600" viewBox="72 132 1081 600"><defs><clipPath id="ct"><rect x="95" y="132" width="1043" height="23"/></clipPath><clipPath id="cl"><rect x="72" y="155" width="23" height="577"/></clipPath></defs><g clip-path="url(#ct)"><line x1="96.5" y1="148" x2="96.5" y2="155" stroke="#5a5a5a"/><text x="96.5" y="141" text-anchor="middle" font-family="Liberation Sans" font-size="9.4" letter-spacing="-0.3" fill="#222">2</text><line x1="106.5" y1="152" x2="106.5" y2="155" stroke="#5a5a5a"/><line x1="116.5" y1="148" x2="116.5" y2="155" stroke="#5a5a5a"/><text x="116.5" y="141" text-anchor="middle" font-family="Liberation Sans" font-size="9.4" letter-spacing="-0.3" fill="#222">0</text><line x1="126.5" y1="152" x2="126.5" y2="155" stroke="#5a5a5a"/><line x1="136.5" y1="148" x2="136.5" y2="155" stroke="#5a5a5a"/><text x="136.5" y="141" text-anchor="middle" font-family="Liberation Sans" font-size="9.4" letter-spacing="-0.3" fill="#222">2</text><line x1="146.5" y1="152" x2="146.5" y2="155" stroke="#5a5a5a"/><line x1="156.5" y1="148" x2="156.5" y2="155" stroke="#5a5a5a"/><text x="156.5" y="141" text-anchor="middle" font-family="Liberation Sans" font-size="9.4" letter-spacing="-0.3" fill="#222">4</text><line x1="166.5" y1="152" x2="166.5" y2="155" stroke="#5a5a5a"/><line x1="176.5" y1="148" x2="176.5" y2="155" stroke="#5a5a5a"/><text x="176.5" y="141" text-anchor="middle" font-family="Liberation Sans" font-size="9.4" letter-spacing="-0.3" fill="#222">6</text><line x1="186.5" y1="152" x2="186.5" y2="155" stroke="#5a5a5a"/><line x1="196.5" y1="148" x2="196.5" y2="155" stroke="#5a5a5a"/><text x="196.5" y="141" text-anchor="middle" font-family="Liberation Sans" font-size="9.4" letter-spacing="-0.3" fill="#222">8</text><line x1="206.5" y1="152" x2="206.5" y2="155" stroke="#5a5a5a"/><line x1="216.5" y1="148" x2="216.5" y2="155" stroke="#5a5a5a"/><text x="216.5" y="141" text-anchor="middle" font-family="Liberation Sans" font-size="9.4" letter-spacing="-0.3" fill="#222">10</text><line x1="226.5" y1="152" x2="226.5" y2="155" stroke="#5a5a5a"/><line x1="236.5" y1="148" x2="236.5" y2="155" stroke="#5a5a5a"/><text x="236.5" y="141" text-anchor="middle" font-family="Liberation Sans" font-size="9.4" letter-spacing="-0.3" fill="#222">12</text><line x1="246.5" y1="152" x2="246.5" y2="155" stroke="#5a5a5a"/><line x1="256.5" y1="148" x2="256.5" y2="155" stroke="#5a5a5a"/><text x="256.5" y="141" text-anchor="middle" font-family="Liberation Sans" font-size="9.4" letter-spacing="-0.3" fill="#222">14</text><line x1="266.5" y1="152" x2="266.5" y2="155" stroke="#5a5a5a"/><line x1="276.5" y1="148" x2="276.5" y2="155" stroke="#5a5a5a"/><text x="276.5" y="141" text-anchor="middle" font-family="Liberation Sans" font-size="9.4" letter-spacing="-0.3" fill="#222">16</text><line x1="286.5" y1="152" x2="286.5" y2="155" stroke="#5a5a5a"/><line x1="296.5" y1="148" x2="296.5" y2="155" stroke="#5a5a5a"/><text x="296.5" y="141" text-anchor="middle" font-family="Liberation Sans" font-size="9.4" letter-spacing="-0.3" fill="#222">18</text><line x1="306.5" y1="152" x2="306.5" y2="155" stroke="#5a5a5a"/><line x1="316.5" y1="148" x2="316.5" y2="155" stroke="#5a5a5a"/><text x="316.5" y="141" text-anchor="middle" font-family="Liberation Sans" font-size="9.4" letter-spacing="-0.3" fill="#222">20</text><line x1="326.5" y1="152" x2="326.5" y2="155" stroke="#5a5a5a"/><line x1="336.5" y1="148" x2="336.5" y2="155" stroke="#5a5a5a"/><text x="336.5" y="141" text-anchor="middle" font-family="Liberation Sans" font-size="9.4" letter-spacing="-0.3" fill="#222">22</text><line x1="346.5" y1="152" x2="346.5" y2="155" stroke="#5a5a5a"/><line x1="356.5" y1="148" x2="356.5" y2="155" stroke="#5a5a5a"/><text x="356.5" y="141" text-anchor="middle" font-family="Liberation Sans" font-size="9.4" letter-spacing="-0.3" fill="#222">24</text><line x1="366.5" y1="152" x2="366.5" y2="155" stroke="#5a5a5a"/><line x1="376.5" y1="148" x2="376.5" y2="155" stroke="#5a5a5a"/><text x="376.5" y="141" text-anchor="middle" font-family="Liberation Sans" font-size="9.4" letter-spacing="-0.3" fill="#222">26</text><line x1="386.5" y1="152" x2="386.5" y2="155" stroke="#5a5a5a"/><line x1="396.5" y1="148" x2="396.5" y2="155" stroke="#5a5a5a"/><text x="396.5" y="141" text-anchor="middle" font-family="Liberation Sans" font-size="9.4" letter-spacing="-0.3" fill="#222">28</text><line x1="406.5" y1="152" x2="406.5" y2="155" stroke="#5a5a5a"/><line x1="416.5" y1="148" x2="416.5" y2="155" stroke="#5a5a5a"/><text x="416.5" y="141" text-anchor="middle" font-family="Liberation Sans" font-size="9.4" letter-spacing="-0.3" fill="#222">30</text><line x1="426.5" y1="152" x2="426.5" y2="155" stroke="#5a5a5a"/><line x1="436.5" y1="148" x2="436.5" y2="155" stroke="#5a5a5a"/><text x="436.5" y="141" text-anchor="middle" font-family="Liberation Sans" font-size="9.4" letter-spacing="-0.3" fill="#222">32</text><line x1="446.5" y1="152" x2="446.5" y2="155" stroke="#5a5a5a"/><line x1="456.5" y1="148" x2="456.5" y2="155" stroke="#5a5a5a"/><text x="456.5" y="141" text-anchor="middle" font-family="Liberation Sans" font-size="9.4" letter-spacing="-0.3" fill="#222">34</text><line x1="466.5" y1="152" x2="466.5" y2="155" stroke="#5a5a5a"/><line x1="476.5" y1="148" x2="476.5" y2="155" stroke="#5a5a5a"/><text x="476.5" y="141" text-anchor="middle" font-family="Liberation Sans" font-size="9.4" letter-spacing="-0.3" fill="#222">36</text><line x1="486.5" y1="152" x2="486.5" y2="155" stroke="#5a5a5a"/><line x1="496.5" y1="148" x2="496.5" y2="155" stroke="#5a5a5a"/><text x="496.5" y="141" text-anchor="middle" font-family="Liberation Sans" font-size="9.4" letter-spacing="-0.3" fill="#222">38</text><line x1="506.5" y1="152" x2="506.5" y2="155" stroke="#5a5a5a"/><line x1="516.5" y1="148" x2="516.5" y2="155" stroke="#5a5a5a"/><text x="516.5" y="141" text-anchor="middle" font-family="Liberation Sans" font-size="9.4" letter-spacing="-0.3" fill="#222">40</text><line x1="526.5" y1="152" x2="526.5" y2="155" stroke="#5a5a5a"/><line x1="536.5" y1="148" x2="536.5" y2="155" stroke="#5a5a5a"/><text x="536.5" y="141" text-anchor="middle" font-family="Liberation Sans" font-size="9.4" letter-spacing="-0.3" fill="#222">42</text><line x1="546.5" y1="152" x2="546.5" y2="155" stroke="#5a5a5a"/><line x1="556.5" y1="148" x2="556.5" y2="155" stroke="#5a5a5a"/><text x="556.5" y="141" text-anchor="middle" font-family="Liberation Sans" font-size="9.4" letter-spacing="-0.3" fill="#222">44</text><line x1="566.5" y1="152" x2="566.5" y2="155" stroke="#5a5a5a"/><line x1="576.5" y1="148" x2="576.5" y2="155" stroke="#5a5a5a"/><text x="576.5" y="141" text-anchor="middle" font-family="Liberation Sans" font-size="9.4" letter-spacing="-0.3" fill="#222">46</text><line x1="586.5" y1="152" x2="586.5" y2="155" stroke="#5a5a5a"/><line x1="596.5" y1="148" x2="596.5" y2="155" stroke="#5a5a5a"/><text x="596.5" y="141" text-anchor="middle" font-family="Liberation Sans" font-size="9.4" letter-spacing="-0.3" fill="#222">48</text><line x1="606.5" y1="152" x2="606.5" y2="155" stroke="#5a5a5a"/><line x1="616.5" y1="148" x2="616.5" y2="155" stroke="#5a5a5a"/><text x="616.5" y="141" text-anchor="middle" font-family="Liberation Sans" font-size="9.4" letter-spacing="-0.3" fill="#222">50</text><line x1="626.5" y1="152" x2="626.5" y2="155" stroke="#5a5a5a"/><line x1="636.5" y1="148" x2="636.5" y2="155" stroke="#5a5a5a"/><text x="636.5" y="141" text-anchor="middle" font-family="Liberation Sans" font-size="9.4" letter-spacing="-0.3" fill="#222">52</text><line x1="646.5" y1="152" x2="646.5" y2="155" stroke="#5a5a5a"/><line x1="656.5" y1="148" x2="656.5" y2="155" stroke="#5a5a5a"/><text x="656.5" y="141" text-anchor="middle" font-family="Liberation Sans" font-size="9.4" letter-spacing="-0.3" fill="#222">54</text><line x1="666.5" y1="152" x2="666.5" y2="155" stroke="#5a5a5a"/><line x1="676.5" y1="148" x2="676.5" y2="155" stroke="#5a5a5a"/><text x="676.5" y="141" text-anchor="middle" font-family="Liberation Sans" font-size="9.4" letter-spacing="-0.3" fill="#222">56</text><line x1="686.5" y1="152" x2="686.5" y2="155" stroke="#5a5a5a"/><line x1="696.5" y1="148" x2="696.5" y2="155" stroke="#5a5a5a"/><text x="696.5" y="141" text-anchor="middle" font-family="Liberation Sans" font-size="9.4" letter-spacing="-0.3" fill="#222">58</text><line x1="706.5" y1="152" x2="706.5" y2="155" stroke="#5a5a5a"/><line x1="716.5" y1="148" x2="716.5" y2="155" stroke="#5a5a5a"/><text x="716.5" y="141" text-anchor="middle" font-family="Liberation Sans" font-size="9.4" letter-spacing="-0.3" fill="#222">60</text><line x1="726.5" y1="152" x2="726.5" y2="155" stroke="#5a5a5a"/><line x1="736.5" y1="148" x2="736.5" y2="155" stroke="#5a5a5a"/><text x="736.5" y="141" text-anchor="middle" font-family="Liberation Sans" font-size="9.4" letter-spacing="-0.3" fill="#222">62</text><line x1="746.5" y1="152" x2="746.5" y2="155" stroke="#5a5a5a"/><line x1="756.5" y1="148" x2="756.5" y2="155" stroke="#5a5a5a"/><text x="756.5" y="141" text-anchor="middle" font-family="Liberation Sans" font-size="9.4" letter-spacing="-0.3" fill="#222">64</text><line x1="766.5" y1="152" x2="766.5" y2="155" stroke="#5a5a5a"/><line x1="776.5" y1="148" x2="776.5" y2="155" stroke="#5a5a5a"/><text x="776.5" y="141" text-anchor="middle" font-family="Liberation Sans" font-size="9.4" letter-spacing="-0.3" fill="#222">66</text><line x1="786.5" y1="152" x2="786.5" y2="155" stroke="#5a5a5a"/><line x1="796.5" y1="148" x2="796.5" y2="155" stroke="#5a5a5a"/><text x="796.5" y="141" text-anchor="middle" font-family="Liberation Sans" font-size="9.4" letter-spacing="-0.3" fill="#222">68</text><line x1="806.5" y1="152" x2="806.5" y2="155" stroke="#5a5a5a"/><line x1="816.5" y1="148" x2="816.5" y2="155" stroke="#5a5a5a"/><text x="816.5" y="141" text-anchor="middle" font-family="Liberation Sans" font-size="9.4" letter-spacing="-0.3" fill="#222">70</text><line x1="826.5" y1="152" x2="826.5" y2="155" stroke="#5a5a5a"/><line x1="836.5" y1="148" x2="836.5" y2="155" stroke="#5a5a5a"/><text x="836.5" y="141" text-anchor="middle" font-family="Liberation Sans" font-size="9.4" letter-spacing="-0.3" fill="#222">72</text><line x1="846.5" y1="152" x2="846.5" y2="155" stroke="#5a5a5a"/><line x1="856.5" y1="148" x2="856.5" y2="155" stroke="#5a5a5a"/><text x="856.5" y="141" text-anchor="middle" font-family="Liberation Sans" font-size="9.4" letter-spacing="-0.3" fill="#222">74</text><line x1="866.5" y1="152" x2="866.5" y2="155" stroke="#5a5a5a"/><line x1="876.5" y1="148" x2="876.5" y2="155" stroke="#5a5a5a"/><text x="876.5" y="141" text-anchor="middle" font-family="Liberation Sans" font-size="9.4" letter-spacing="-0.3" fill="#222">76</text><line x1="886.5" y1="152" x2="886.5" y2="155" stroke="#5a5a5a"/><line x1="896.5" y1="148" x2="896.5" y2="155" stroke="#5a5a5a"/><text x="896.5" y="141" text-anchor="middle" font-family="Liberation Sans" font-size="9.4" letter-spacing="-0.3" fill="#222">78</text><line x1="906.5" y1="152" x2="906.5" y2="155" stroke="#5a5a5a"/><line x1="916.5" y1="148" x2="916.5" y2="155" stroke="#5a5a5a"/><text x="916.5" y="141" text-anchor="middle" font-family="Liberation Sans" font-size="9.4" letter-spacing="-0.3" fill="#222">80</text><line x1="926.5" y1="152" x2="926.5" y2="155" stroke="#5a5a5a"/><line x1="936.5" y1="148" x2="936.5" y2="155" stroke="#5a5a5a"/><text x="936.5" y="141" text-anchor="middle" font-family="Liberation Sans" font-size="9.4" letter-spacing="-0.3" fill="#222">82</text><line x1="946.5" y1="152" x2="946.5" y2="155" stroke="#5a5a5a"/><line x1="956.5" y1="148" x2="956.5" y2="155" stroke="#5a5a5a"/><text x="956.5" y="141" text-anchor="middle" font-family="Liberation Sans" font-size="9.4" letter-spacing="-0.3" fill="#222">84</text><line x1="966.5" y1="152" x2="966.5" y2="155" stroke="#5a5a5a"/><line x1="976.5" y1="148" x2="976.5" y2="155" stroke="#5a5a5a"/><text x="976.5" y="141" text-anchor="middle" font-family="Liberation Sans" font-size="9.4" letter-spacing="-0.3" fill="#222">86</text><line x1="986.5" y1="152" x2="986.5" y2="155" stroke="#5a5a5a"/><line x1="996.5" y1="148" x2="996.5" y2="155" stroke="#5a5a5a"/><text x="996.5" y="141" text-anchor="middle" font-family="Liberation Sans" font-size="9.4" letter-spacing="-0.3" fill="#222">88</text><line x1="1006.5" y1="152" x2="1006.5" y2="155" stroke="#5a5a5a"/><line x1="1016.5" y1="148" x2="1016.5" y2="155" stroke="#5a5a5a"/><text x="1016.5" y="141" text-anchor="middle" font-family="Liberation Sans" font-size="9.4" letter-spacing="-0.3" fill="#222">90</text><line x1="1026.5" y1="152" x2="1026.5" y2="155" stroke="#5a5a5a"/><line x1="1036.5" y1="148" x2="1036.5" y2="155" stroke="#5a5a5a"/><text x="1036.5" y="141" text-anchor="middle" font-family="Liberation Sans" font-size="9.4" letter-spacing="-0.3" fill="#222">92</text><line x1="1046.5" y1="152" x2="1046.5" y2="155" stroke="#5a5a5a"/><line x1="1056.5" y1="148" x2="1056.5" y2="155" stroke="#5a5a5a"/><text x="1056.5" y="141" text-anchor="middle" font-family="Liberation Sans" font-size="9.4" letter-spacing="-0.3" fill="#222">94</text><line x1="1066.5" y1="152" x2="1066.5" y2="155" stroke="#5a5a5a"/><line x1="1076.5" y1="148" x2="1076.5" y2="155" stroke="#5a5a5a"/><text x="1076.5" y="141" text-anchor="middle" font-family="Liberation Sans" font-size="9.4" letter-spacing="-0.3" fill="#222">96</text><line x1="1086.5" y1="152" x2="1086.5" y2="155" stroke="#5a5a5a"/><line x1="1096.5" y1="148" x2="1096.5" y2="155" stroke="#5a5a5a"/><text x="1096.5" y="141" text-anchor="middle" font-family="Liberation Sans" font-size="9.4" letter-spacing="-0.3" fill="#222">98</text><line x1="1106.5" y1="152" x2="1106.5" y2="155" stroke="#5a5a5a"/><line x1="1116.5" y1="148" x2="1116.5" y2="155" stroke="#5a5a5a"/><text x="1116.5" y="141" text-anchor="middle" font-family="Liberation Sans" font-size="9.4" letter-spacing="-0.3" fill="#222">100</text><line x1="1126.5" y1="152" x2="1126.5" y2="155" stroke="#5a5a5a"/><line x1="1136.5" y1="148" x2="1136.5" y2="155" stroke="#5a5a5a"/><text x="1136.5" y="141" text-anchor="middle" font-family="Liberation Sans" font-size="9.4" letter-spacing="-0.3" fill="#222">102</text><line x1="1146.5" y1="152" x2="1146.5" y2="155" stroke="#5a5a5a"/></g><g clip-path="url(#cl)"><line x1="88" y1="733.5" x2="95" y2="733.5" stroke="#5a5a5a"/><text transform="translate(81,733.5) rotate(-90)" x="0" y="0" text-anchor="middle" font-family="Liberation Sans" font-size="9.4" letter-spacing="-0.3" fill="#222">-20</text><line x1="92" y1="723.5" x2="95" y2="723.5" stroke="#5a5a5a"/><line x1="88" y1="713.5" x2="95" y2="713.5" stroke="#5a5a5a"/><text transform="translate(81,713.5) rotate(-90)" x="0" y="0" text-anchor="middle" font-family="Liberation Sans" font-size="9.4" letter-spacing="-0.3" fill="#222">-18</text><line x1="92" y1="703.5" x2="95" y2="703.5" stroke="#5a5a5a"/><line x1="88" y1="693.5" x2="95" y2="693.5" stroke="#5a5a5a"/><text transform="translate(81,693.5) rotate(-90)" x="0" y="0" text-anchor="middle" font-family="Liberation Sans" font-size="9.4" letter-spacing="-0.3" fill="#222">-16</text><line x1="92" y1="683.5" x2="95" y2="683.5" stroke="#5a5a5a"/><line x1="88" y1="673.5" x2="95" y2="673.5" stroke="#5a5a5a"/><text transform="translate(81,673.5) rotate(-90)" x="0" y="0" text-anchor="middle" font-family="Liberation Sans" font-size="9.4" letter-spacing="-0.3" fill="#222">-14</text><line x1="92" y1="663.5" x2="95" y2="663.5" stroke="#5a5a5a"/><line x1="88" y1="653.5" x2="95" y2="653.5" stroke="#5a5a5a"/><text transform="translate(81,653.5) rotate(-90)" x="0" y="0" text-anchor="middle" font-family="Liberation Sans" font-size="9.4" letter-spacing="-0.3" fill="#222">-12</text><line x1="92" y1="643.5" x2="95" y2="643.5" stroke="#5a5a5a"/><line x1="88" y1="633.5" x2="95" y2="633.5" stroke="#5a5a5a"/><text transform="translate(81,633.5) rotate(-90)" x="0" y="0" text-anchor="middle" font-family="Liberation Sans" font-size="9.4" letter-spacing="-0.3" fill="#222">-10</text><line x1="92" y1="623.5" x2="95" y2="623.5" stroke="#5a5a5a"/><line x1="88" y1="613.5" x2="95" y2="613.5" stroke="#5a5a5a"/><text transform="translate(81,613.5) rotate(-90)" x="0" y="0" text-anchor="middle" font-family="Liberation Sans" font-size="9.4" letter-spacing="-0.3" fill="#222">-8</text><line x1="92" y1="603.5" x2="95" y2="603.5" stroke="#5a5a5a"/><line x1="88" y1="593.5" x2="95" y2="593.5" stroke="#5a5a5a"/><text transform="translate(81,593.5) rotate(-90)" x="0" y="0" text-anchor="middle" font-family="Liberation Sans" font-size="9.4" letter-spacing="-0.3" fill="#222">-6</text><line x1="92" y1="583.5" x2="95" y2="583.5" stroke="#5a5a5a"/><line x1="88" y1="573.5" x2="95" y2="573.5" stroke="#5a5a5a"/><text transform="translate(81,573.5) rotate(-90)" x="0" y="0" text-anchor="middle" font-family="Liberation Sans" font-size="9.4" letter-spacing="-0.3" fill="#222">-4</text><line x1="92" y1="563.5" x2="95" y2="563.5" stroke="#5a5a5a"/><line x1="88" y1="553.5" x2="95" y2="553.5" stroke="#5a5a5a"/><text transform="translate(81,553.5) rotate(-90)" x="0" y="0" text-anchor="middle" font-family="Liberation Sans" font-size="9.4" letter-spacing="-0.3" fill="#222">-2</text><line x1="92" y1="543.5" x2="95" y2="543.5" stroke="#5a5a5a"/><line x1="88" y1="533.5" x2="95" y2="533.5" stroke="#5a5a5a"/><text transform="translate(81,533.5) rotate(-90)" x="0" y="0" text-anchor="middle" font-family="Liberation Sans" font-size="9.4" letter-spacing="-0.3" fill="#222">0</text><line x1="92" y1="523.5" x2="95" y2="523.5" stroke="#5a5a5a"/><line x1="88" y1="513.5" x2="95" y2="513.5" stroke="#5a5a5a"/><text transform="translate(81,513.5) rotate(-90)" x="0" y="0" text-anchor="middle" font-family="Liberation Sans" font-size="9.4" letter-spacing="-0.3" fill="#222">2</text><line x1="92" y1="503.5" x2="95" y2="503.5" stroke="#5a5a5a"/><line x1="88" y1="493.5" x2="95" y2="493.5" stroke="#5a5a5a"/><text transform="translate(81,493.5) rotate(-90)" x="0" y="0" text-anchor="middle" font-family="Liberation Sans" font-size="9.4" letter-spacing="-0.3" fill="#222">4</text><line x1="92" y1="483.5" x2="95" y2="483.5" stroke="#5a5a5a"/><line x1="88" y1="473.5" x2="95" y2="473.5" stroke="#5a5a5a"/><text transform="translate(81,473.5) rotate(-90)" x="0" y="0" text-anchor="middle" font-family="Liberation Sans" font-size="9.4" letter-spacing="-0.3" fill="#222">6</text><line x1="92" y1="463.5" x2="95" y2="463.5" stroke="#5a5a5a"/><line x1="88" y1="453.5" x2="95" y2="453.5" stroke="#5a5a5a"/><text transform="translate(81,453.5) rotate(-90)" x="0" y="0" text-anchor="middle" font-family="Liberation Sans" font-size="9.4" letter-spacing="-0.3" fill="#222">8</text><line x1="92" y1="443.5" x2="95" y2="443.5" stroke="#5a5a5a"/><line x1="88" y1="433.5" x2="95" y2="433.5" stroke="#5a5a5a"/><text transform="translate(81,433.5) rotate(-90)" x="0" y="0" text-anchor="middle" font-family="Liberation Sans" font-size="9.4" letter-spacing="-0.3" fill="#222">10</text><line x1="92" y1="423.5" x2="95" y2="423.5" stroke="#5a5a5a"/><line x1="88" y1="413.5" x2="95" y2="413.5" stroke="#5a5a5a"/><text transform="translate(81,413.5) rotate(-90)" x="0" y="0" text-anchor="middle" font-family="Liberation Sans" font-size="9.4" letter-spacing="-0.3" fill="#222">12</text><line x1="92" y1="403.5" x2="95" y2="403.5" stroke="#5a5a5a"/><line x1="88" y1="393.5" x2="95" y2="393.5" stroke="#5a5a5a"/><text transform="translate(81,393.5) rotate(-90)" x="0" y="0" text-anchor="middle" font-family="Liberation Sans" font-size="9.4" letter-spacing="-0.3" fill="#222">14</text><line x1="92" y1="383.5" x2="95" y2="383.5" stroke="#5a5a5a"/><line x1="88" y1="373.5" x2="95" y2="373.5" stroke="#5a5a5a"/><text transform="translate(81,373.5) rotate(-90)" x="0" y="0" text-anchor="middle" font-family="Liberation Sans" font-size="9.4" letter-spacing="-0.3" fill="#222">16</text><line x1="92" y1="363.5" x2="95" y2="363.5" stroke="#5a5a5a"/><line x1="88" y1="353.5" x2="95" y2="353.5" stroke="#5a5a5a"/><text transform="translate(81,353.5) rotate(-90)" x="0" y="0" text-anchor="middle" font-family="Liberation Sans" font-size="9.4" letter-spacing="-0.3" fill="#222">18</text><line x1="92" y1="343.5" x2="95" y2="343.5" stroke="#5a5a5a"/><line x1="88" y1="333.5" x2="95" y2="333.5" stroke="#5a5a5a"/><text transform="translate(81,333.5) rotate(-90)" x="0" y="0" text-anchor="middle" font-family="Liberation Sans" font-size="9.4" letter-spacing="-0.3" fill="#222">20</text><line x1="92" y1="323.5" x2="95" y2="323.5" stroke="#5a5a5a"/><line x1="88" y1="313.5" x2="95" y2="313.5" stroke="#5a5a5a"/><text transform="translate(81,313.5) rotate(-90)" x="0" y="0" text-anchor="middle" font-family="Liberation Sans" font-size="9.4" letter-spacing="-0.3" fill="#222">22</text><line x1="92" y1="303.5" x2="95" y2="303.5" stroke="#5a5a5a"/><line x1="88" y1="293.5" x2="95" y2="293.5" stroke="#5a5a5a"/><text transform="translate(81,293.5) rotate(-90)" x="0" y="0" text-anchor="middle" font-family="Liberation Sans" font-size="9.4" letter-spacing="-0.3" fill="#222">24</text><line x1="92" y1="283.5" x2="95" y2="283.5" stroke="#5a5a5a"/><line x1="88" y1="273.5" x2="95" y2="273.5" stroke="#5a5a5a"/><text transform="translate(81,273.5) rotate(-90)" x="0" y="0" text-anchor="middle" font-family="Liberation Sans" font-size="9.4" letter-spacing="-0.3" fill="#222">26</text><line x1="92" y1="263.5" x2="95" y2="263.5" stroke="#5a5a5a"/><line x1="88" y1="253.5" x2="95" y2="253.5" stroke="#5a5a5a"/><text transform="translate(81,253.5) rotate(-90)" x="0" y="0" text-anchor="middle" font-family="Liberation Sans" font-size="9.4" letter-spacing="-0.3" fill="#222">28</text><line x1="92" y1="243.5" x2="95" y2="243.5" stroke="#5a5a5a"/><line x1="88" y1="233.5" x2="95" y2="233.5" stroke="#5a5a5a"/><text transform="translate(81,233.5) rotate(-90)" x="0" y="0" text-anchor="middle" font-family="Liberation Sans" font-size="9.4" letter-spacing="-0.3" fill="#222">30</text><line x1="92" y1="223.5" x2="95" y2="223.5" stroke="#5a5a5a"/><line x1="88" y1="213.5" x2="95" y2="213.5" stroke="#5a5a5a"/><text transform="translate(81,213.5) rotate(-90)" x="0" y="0" text-anchor="middle" font-family="Liberation Sans" font-size="9.4" letter-spacing="-0.3" fill="#222">32</text><line x1="92" y1="203.5" x2="95" y2="203.5" stroke="#5a5a5a"/><line x1="88" y1="193.5" x2="95" y2="193.5" stroke="#5a5a5a"/><text transform="translate(81,193.5) rotate(-90)" x="0" y="0" text-anchor="middle" font-family="Liberation Sans" font-size="9.4" letter-spacing="-0.3" fill="#222">34</text><line x1="92" y1="183.5" x2="95" y2="183.5" stroke="#5a5a5a"/><line x1="88" y1="173.5" x2="95" y2="173.5" stroke="#5a5a5a"/><text transform="translate(81,173.5) rotate(-90)" x="0" y="0" text-anchor="middle" font-family="Liberation Sans" font-size="9.4" letter-spacing="-0.3" fill="#222">36</text><line x1="92" y1="163.5" x2="95" y2="163.5" stroke="#5a5a5a"/><line x1="88" y1="153.5" x2="95" y2="153.5" stroke="#5a5a5a"/><text transform="translate(81,153.5) rotate(-90)" x="0" y="0" text-anchor="middle" font-family="Liberation Sans" font-size="9.4" letter-spacing="-0.3" fill="#222">38</text></g><path d="M451 145 L462 145 L456.5 151 Z" fill="#000"/><path d="M85 387.5 L85 399.5 L91 393.5 Z" fill="#000"/></svg>
<div class="a" style="left:582.5px;top:113.5px;font-size:11.9px;color:#222;white-space:nowrap">* bond_washer.dxf</div>
<svg class="a" style="left:95px;top:155px" width="1043" height="577" viewBox="95 155 1043 577"><defs><pattern id="dots" x="6" y="3" width="10" height="10" patternUnits="userSpaceOnUse"><rect x="0" y="0" width="1" height="1" fill="#3c3c3c"/></pattern></defs><rect x="95" y="155" width="1043" height="577" fill="#000"/><rect x="116" y="155" width="1" height="577" fill="#1c1c1c"/><rect x="216" y="155" width="1" height="577" fill="#1c1c1c"/><rect x="316" y="155" width="1" height="577" fill="#1c1c1c"/><rect x="416" y="155" width="1" height="577" fill="#1c1c1c"/><rect x="516" y="155" width="1" height="577" fill="#1c1c1c"/><rect x="616" y="155" width="1" height="577" fill="#1c1c1c"/><rect x="716" y="155" width="1" height="577" fill="#1c1c1c"/><rect x="816" y="155" width="1" height="577" fill="#1c1c1c"/><rect x="916" y="155" width="1" height="577" fill="#1c1c1c"/><rect x="1016" y="155" width="1" height="577" fill="#1c1c1c"/><rect x="1116" y="155" width="1" height="577" fill="#1c1c1c"/><rect x="95" y="233" width="1043" height="1" fill="#1c1c1c"/><rect x="95" y="333" width="1043" height="1" fill="#1c1c1c"/><rect x="95" y="433" width="1043" height="1" fill="#1c1c1c"/><rect x="95" y="533" width="1043" height="1" fill="#1c1c1c"/><rect x="95" y="633" width="1043" height="1" fill="#1c1c1c"/><rect x="95" y="155" width="1043" height="577" fill="url(#dots)"/><rect x="95" y="533" width="41" height="1" fill="#c00000"/><rect x="116" y="513" width="1" height="41" fill="#c00000"/><line x1="95" y1="393.5" x2="1138" y2="393.5" stroke="#9a7414" stroke-width="1" stroke-dasharray="4.5 1.5"/><line x1="456.5" y1="155" x2="456.5" y2="732" stroke="#9a7414" stroke-width="1" stroke-dasharray="4.5 1.5"/><rect x="216.5" y="353.7" width="800" height="179.8" fill="none" stroke="#fff" stroke-width="2.6"/><circle cx="316.5" cy="443.5" r="40" fill="none" stroke="#fff" stroke-width="2.6"/><circle cx="916.5" cy="443.5" r="40" fill="none" stroke="#fff" stroke-width="2.6"/><line x1="195.6" y1="443.5" x2="1037.4" y2="443.5" stroke="#f00" stroke-width="1.5" stroke-dasharray="17 7 2 7"/><line x1="316.5" y1="332.5" x2="316.5" y2="553.5" stroke="#f00" stroke-width="1.5" stroke-dasharray="17 7 2 7" stroke-dashoffset="13"/><line x1="916.5" y1="332.5" x2="916.5" y2="553.5" stroke="#f00" stroke-width="1.5" stroke-dasharray="17 7 2 7" stroke-dashoffset="13"/><defs><radialGradient id="snap" cx="456.5" cy="393.5" r="40" gradientUnits="userSpaceOnUse"><stop offset="0.78" stop-color="#3a444c" stop-opacity="0"/><stop offset="0.86" stop-color="#4c5964" stop-opacity="0.7"/><stop offset="0.935" stop-color="#6e7e8b" stop-opacity="0.95"/><stop offset="0.975" stop-color="#7a8a97" stop-opacity="0.85"/><stop offset="1" stop-color="#7a8a97" stop-opacity="0"/></radialGradient></defs><circle cx="456.5" cy="393.5" r="40" fill="url(#snap)"/><rect x="446.5" y="304.5" width="21" height="178" fill="none" stroke="#7c9ad0" stroke-width="1" stroke-dasharray="7 2 1 2"/><text x="0" y="0" transform="translate(465,482.5) rotate(-90)" font-family="Liberation Sans" font-size="27.4" fill="#fff">104.245.02.4B</text><rect x="441" y="392.3" width="31" height="2.4" fill="#a4a4a4"/><rect x="455.3" y="378" width="2.4" height="30" fill="#a4a4a4"/><circle cx="456.5" cy="393.5" r="3.5" fill="none" stroke="#c89020" stroke-width=".8" stroke-dasharray="1.5 1"/><text x="463.5" y="411.3" font-family="Liberation Sans" font-size="13.8" fill="#f0b62a">Grille</text></svg>
<div class="a" style="left:72px;top:748px;width:1081px;height:2px;background:#b4b4b4"></div>
<div class="a" style="left:72px;top:750px;width:1081px;height:20px;background:#fff"></div>
<div class="a" style="left:72px;top:770px;width:1081px;height:1px;background:#bdbdbd"></div>
<div class="a" style="left:72px;top:771px;width:1081px;height:26px;background:#ebebeb"></div>
<div class="a" style="left:77px;top:750px;font-size:13.2px;font-style:italic;color:#1a1ad8;white-space:nowrap">Commande: paste</div>
<div class="a" style="left:73px;top:777px;font-size:13px;color:#111;white-space:nowrap">Position :</div>
<div class="a" style="left:132px;top:776px;width:995px;height:18px;background:#fff"></div>
<div class="a" style="left:1127px;top:772px;width:26px;height:25px;border:1px solid #c4c4c4;background:linear-gradient(#e6e6e6,#f4f4f4)"></div>
<svg class="a" style="left:1133px;top:780px" width="15" height="11" viewBox="0 0 15 11"><rect x=".5" y=".5" width="14" height="10" fill="#eee" stroke="#444"/><rect x="0" y="0" width="15" height="3" fill="#111"/></svg>
<div class="a" style="left:1099px;top:733px;width:54px;height:15px;background:#e8e8e8"></div>
<div class="a" style="left:1118.5px;top:733.5px;font-size:12.4px;color:#111;white-space:nowrap;-webkit-text-stroke:.15px #111">1 &lt; 10</div>
<div class="a" style="left:281px;top:737px;width:633px;height:8px;border-radius:4px;background:#808080"></div>
<div class="a" style="left:1143px;top:283px;width:8px;height:321px;border-radius:4px;background:#808080"></div>
<svg class="a" style="left:72px;top:108px" width="60" height="24" viewBox="72 108 60 24"><path d="M79 115 L87 123 M87 115 L79 123" stroke="#555" stroke-width="1.1"/><circle cx="102" cy="118.5" r="6" fill="#dfe8f4" stroke="#2a4a8a" stroke-width="2"/><path d="M100 114 V120 H104" stroke="#c44" stroke-width=".7" fill="none"/><path d="M102 119 L107 125" stroke="#f0b030" stroke-width="2"/></svg>
<div class="a" style="left:0;top:797px;width:1500px;height:47px;background:#dcdcdc"></div>
<div class="a" style="left:253px;top:802px;width:1px;height:40px;background:#7a7a7a"></div>
<div style="position:absolute;font-size:9.4px;letter-spacing:.33px;color:#1a1a1a;white-space:nowrap;-webkit-text-stroke:.3px #1a1a1a;left:2px;top:806.5px">34,14</div><div style="position:absolute;font-size:9.4px;letter-spacing:.33px;color:#1a1a1a;white-space:nowrap;-webkit-text-stroke:.3px #1a1a1a;left:2px;top:826px">-</div>
<div style="position:absolute;font-size:9.4px;letter-spacing:.33px;color:#1a1a1a;white-space:nowrap;-webkit-text-stroke:.3px #1a1a1a;left:256.5px;top:806.5px;letter-spacing:.45px">36.7696&lt;22°</div><div style="position:absolute;font-size:9.4px;letter-spacing:.33px;color:#1a1a1a;white-space:nowrap;-webkit-text-stroke:.3px #1a1a1a;left:257px;top:826px">-</div>
<div style="position:absolute;font-size:9.4px;letter-spacing:.33px;color:#1a1a1a;white-space:nowrap;-webkit-text-stroke:.3px #1a1a1a;left:662.5px;top:817.2px">Position</div><div style="position:absolute;font-size:9.4px;letter-spacing:.33px;color:#1a1a1a;white-space:nowrap;-webkit-text-stroke:.3px #1a1a1a;left:754px;top:817.2px">Annuler</div>
<div style="position:absolute;font-size:9.4px;letter-spacing:.33px;color:#1a1a1a;white-space:nowrap;-webkit-text-stroke:.3px #1a1a1a;left:949px;top:817px;letter-spacing:.38px">Aucune des entités sélectionnées.</div>
<div class="a" style="left:506.7px;top:819px;width:5.6px;height:5.6px;border-radius:50%;background:#c4c4c4"></div>
<div class="a" style="left:940.2px;top:819px;width:5.6px;height:5.6px;border-radius:50%;background:#c4c4c4"></div>
<div class="a" style="left:1269.7px;top:819px;width:5.6px;height:5.6px;border-radius:50%;background:#c4c4c4"></div>
<svg class="a" style="left:716px;top:805px" width="20" height="32" viewBox="0 0 20 32"><path d="M10 1.5 C16 1.5 18.5 6 18.5 12 V22 C18.5 27.5 15 30.5 10 30.5 C5 30.5 1.5 27.5 1.5 22 V12 C1.5 6 4 1.5 10 1.5 Z" fill="#fff" stroke="#444" stroke-width=".9"/><path d="M1.5 14.5 Q10 12.5 18.5 14.5" fill="none" stroke="#444" stroke-width="1.1"/><rect x="8.4" y="3" width="3.2" height="7.5" rx="1.6" fill="#fff" stroke="#444" stroke-width=".9"/><path d="M10 1.5 V3 M10 10.5 V13.3" stroke="#444" stroke-width=".9"/></svg>
<div class="a" style="left:1155px;top:108px;width:300px;height:689px;background:#fff;border-left:1px solid #c4c4c4;border-right:1px solid #cdcdcd"></div>
<div class="a" style="left:1155px;top:108px;width:300px;height:22px;background:linear-gradient(#ececec,#dedede);border-left:1px solid #c4c4c4"></div><div class="a" style="left:1155px;top:130px;width:300px;height:26px;background:#d0d0d0"></div><div class="a" style="left:1155px;top:130px;width:61px;height:26px;border:1px solid #9c9c9c;background:linear-gradient(#f6f6f6,#e8e8e8)"></div><div class="a" style="left:1215px;top:130px;width:61px;height:26px;border:1px solid #9c9c9c;background:linear-gradient(#f6f6f6,#e8e8e8)"></div><div class="a" style="left:1275px;top:130px;width:61px;height:26px;border:1px solid #9c9c9c;background:linear-gradient(#f6f6f6,#e8e8e8)"></div><div class="a" style="left:1335px;top:130px;width:61px;height:26px;border:1px solid #9c9c9c;background:linear-gradient(#f6f6f6,#e8e8e8)"></div><div class="a" style="left:1395px;top:130px;width:60px;height:26px;border:1px solid #9c9c9c;background:linear-gradient(#f6f6f6,#e8e8e8)"></div><div class="a" style="left:1155px;top:155px;width:300px;height:2px;background:#b8b8b8"></div><div class="a" style="left:1155px;top:108px;width:300px;height:1px;background:#c8c8c8"></div><div class="a" style="left:1276px;top:112.5px;font-size:11.9px;color:#333;white-space:nowrap">Liste des calques</div><svg class="a" style="left:1155px;top:108px" width="300" height="300" viewBox="1155 108 300 300"><circle cx="1164" cy="118.5" r="6.8" fill="#6c6c6c"/><path d="M1161 115.5 L1167 121.5 M1167 115.5 L1161 121.5" stroke="#fff" stroke-width="1.6"/><circle cx="1182" cy="118.5" r="6.8" fill="#6c6c6c"/><rect x="1178.5" y="117" width="5" height="4.5" fill="none" stroke="#fff" stroke-width="1.1"/><path d="M1180.5 117 V115 H1185.5 V119.5 H1183.5" fill="none" stroke="#fff" stroke-width="1.1"/><g transform="translate(1185,143) scale(1)"><path d="M-7.5 0 C-4 -6 4 -6 7.5 0 C4 6 -4 6 -7.5 0 Z" fill="#000"/><path d="M-4.5 1 C-2 -2.5 2 -2.5 4.5 1 C2 4 -2 4 -4.5 1 Z" fill="#fff"/><circle cx="0" cy="0.5" r="2.2" fill="#000"/><circle cx="-0.8" cy="-0.3" r=".7" fill="#fff"/></g><g transform="translate(1245,143) scale(1)"><path d="M-7.5 0 C-4 -6 4 -6 7.5 0 C4 6 -4 6 -7.5 0 Z" fill="#aaa"/><path d="M-4.5 1 C-2 -2.5 2 -2.5 4.5 1 C2 4 -2 4 -4.5 1 Z" fill="#fff"/><circle cx="0" cy="0.5" r="2.2" fill="#aaa"/><circle cx="-0.8" cy="-0.3" r=".7" fill="#fff"/></g><path d="M1298.5 143 H1310.5 M1304.5 137 V149" stroke="#e00000" stroke-width="3"/><path d="M1359 143 H1371" stroke="#e00000" stroke-width="3"/><path d="M1419 149 L1431 137" stroke="#8a6a20" stroke-width="3.6" stroke-linecap="round"/><path d="M1419 149 L1431 137" stroke="#e8b040" stroke-width="2.4"/><path d="M1429 139 L1431 137" stroke="#e83030" stroke-width="3" stroke-linecap="round"/><rect x="1161.5" y="163.5" width="15" height="8" fill="#fff" stroke="#000" stroke-width="1"/><g transform="translate(1423,166.5) scale(1)"><path d="M-7.5 0 C-4 -6 4 -6 7.5 0 C4 6 -4 6 -7.5 0 Z" fill="#000"/><path d="M-4.5 1 C-2 -2.5 2 -2.5 4.5 1 C2 4 -2 4 -4.5 1 Z" fill="#fff"/><circle cx="0" cy="0.5" r="2.2" fill="#000"/><circle cx="-0.8" cy="-0.3" r=".7" fill="#fff"/></g><path d="M1441.5 167 V164.5 A3.5 3.5 0 0 1 1448.5 164.5 V167" fill="none" stroke="#b8b8b8" stroke-width="1.6"/><rect x="1440" y="166.5" width="10" height="7" fill="#b8b8b8"/><rect x="1161.5" y="183.5" width="15" height="8" fill="#f00" stroke="#000" stroke-width="1"/><g transform="translate(1423,186.5) scale(1)"><path d="M-7.5 0 C-4 -6 4 -6 7.5 0 C4 6 -4 6 -7.5 0 Z" fill="#000"/><path d="M-4.5 1 C-2 -2.5 2 -2.5 4.5 1 C2 4 -2 4 -4.5 1 Z" fill="#fff"/><circle cx="0" cy="0.5" r="2.2" fill="#000"/><circle cx="-0.8" cy="-0.3" r=".7" fill="#fff"/></g><path d="M1441.5 187 V184.5 A3.5 3.5 0 0 1 1448.5 184.5 V187" fill="none" stroke="#b8b8b8" stroke-width="1.6"/><rect x="1440" y="186.5" width="10" height="7" fill="#b8b8b8"/><rect x="1161.5" y="203.5" width="15" height="8" fill="#000" stroke="#000" stroke-width="1"/><g transform="translate(1423,206.5) scale(1)"><path d="M-7.5 0 C-4 -6 4 -6 7.5 0 C4 6 -4 6 -7.5 0 Z" fill="#000"/><path d="M-4.5 1 C-2 -2.5 2 -2.5 4.5 1 C2 4 -2 4 -4.5 1 Z" fill="#fff"/><circle cx="0" cy="0.5" r="2.2" fill="#000"/><circle cx="-0.8" cy="-0.3" r=".7" fill="#fff"/></g><path d="M1441.5 207 V204.5 A3.5 3.5 0 0 1 1448.5 204.5 V207" fill="none" stroke="#b8b8b8" stroke-width="1.6"/><rect x="1440" y="206.5" width="10" height="7" fill="#b8b8b8"/><rect x="1161.5" y="223.5" width="15" height="8" fill="#fff" stroke="#000" stroke-width="1"/><g transform="translate(1423,226.5) scale(1)"><path d="M-7.5 0 C-4 -6 4 -6 7.5 0 C4 6 -4 6 -7.5 0 Z" fill="#000"/><path d="M-4.5 1 C-2 -2.5 2 -2.5 4.5 1 C2 4 -2 4 -4.5 1 Z" fill="#fff"/><circle cx="0" cy="0.5" r="2.2" fill="#000"/><circle cx="-0.8" cy="-0.3" r=".7" fill="#fff"/></g><path d="M1441.5 227 V224.5 A3.5 3.5 0 0 1 1448.5 224.5 V227" fill="none" stroke="#b8b8b8" stroke-width="1.6"/><rect x="1440" y="226.5" width="10" height="7" fill="#b8b8b8"/><path d="M1395.5 232.5 L1406.5 221.5" stroke="#8a6a20" stroke-width="3.6" stroke-linecap="round"/><path d="M1395.5 232.5 L1406.5 221.5" stroke="#e8b040" stroke-width="2.4"/><path d="M1404.5 223.5 L1406.5 221.5" stroke="#e83030" stroke-width="3" stroke-linecap="round"/></svg><div class="a" style="left:1183px;top:160px;font-size:13px;color:#111;white-space:nowrap">0</div><div class="a" style="left:1183px;top:180px;font-size:13px;color:#111;white-space:nowrap">Center</div><div class="a" style="left:1183px;top:200px;font-size:13px;color:#111;white-space:nowrap">Hidden</div><div class="a" style="left:1183px;top:220px;font-size:13px;color:#111;white-space:nowrap">Visible</div>
<div class="a" style="left:1455px;top:108px;width:45px;height:689px;background:linear-gradient(90deg,#ececec,#e2e2e2 50%,#c8c8c8)"></div>
<div class="a" style="left:1463px;top:116px;width:26px;height:2px;background:repeating-linear-gradient(90deg,#a8a8a8 0 2px,transparent 2px 6px)"></div><div class="a" style="left:1461px;top:260px;width:38px;height:1px;background:repeating-linear-gradient(90deg,#888 0 1px,transparent 1px 3px)"></div><div class="a" style="left:1461px;top:408px;width:38px;height:1px;background:repeating-linear-gradient(90deg,#888 0 1px,transparent 1px 3px)"></div><div class="a" style="left:1456px;top:120px;width:43px;height:43px;border-radius:6px;background:#bdbdbd"></div><div class="a" style="left:1456px;top:417px;width:43px;height:43px;border-radius:6px;background:#bdbdbd"></div><svg class="a" style="left:1463px;top:127px" width="28" height="28" viewBox="0 0 28 28"><rect x=".5" y=".5" width="27" height="27" fill="#fff" stroke="#222"/><rect x="0" y="0" width="28" height="4.5" fill="#000"/><rect x="1.5" y="1" width="3" height="3" fill="#fff"/><path d="M8 11 L18 7 V20 L8 24 Z" fill="#777" stroke="#333" stroke-width=".6"/><path d="M10 12 L21 7.5 V20.5 L10 25 Z" fill="#fff" stroke="#555" stroke-width=".6"/><path d="M14 21 L19 12 V20 Z" fill="none" stroke="#f44" stroke-width=".8"/></svg><svg class="a" style="left:1463px;top:174px" width="28" height="28" viewBox="0 0 28 28"><rect x=".5" y=".5" width="27" height="27" fill="#fff" stroke="#222"/><rect x="0" y="0" width="28" height="4.5" fill="#000"/><rect x="1.5" y="1" width="3" height="3" fill="#fff"/><rect x="8" y="11" width="11" height="8" fill="#f8ecc0" stroke="#777" stroke-width=".7"/><circle cx="17" cy="19" r="4.5" fill="#f8ecc0" stroke="#777" stroke-width=".7"/></svg><svg class="a" style="left:1463px;top:220px" width="28" height="28" viewBox="0 0 28 28"><rect x=".5" y=".5" width="27" height="27" fill="#fff" stroke="#222"/><rect x="0" y="0" width="28" height="4.5" fill="#000"/><rect x="1.5" y="1" width="3" height="3" fill="#fff"/><rect x="6" y="9" width="16" height="12" rx="2" fill="#f4f6f8" stroke="#b8c8dc" stroke-width=".9"/></svg><svg class="a" style="left:1463px;top:276px" width="28" height="28" viewBox="0 0 28 28"><rect x=".5" y=".5" width="27" height="27" fill="#fff" stroke="#222"/><rect x="0" y="0" width="28" height="4.5" fill="#000"/><rect x="1.5" y="1" width="3" height="3" fill="#fff"/><rect x="5" y="8" width="4" height="3" fill="#111"/><rect x="5" y="14" width="4" height="3" fill="#111"/><rect x="5" y="20" width="4" height="3" fill="#111"/><rect x="11" y="8" width="12" height="3" fill="none" stroke="#222" stroke-width=".7"/><rect x="11" y="14" width="12" height="3" fill="none" stroke="#222" stroke-width=".7"/><rect x="11" y="20" width="12" height="3" fill="none" stroke="#222" stroke-width=".7"/></svg><svg class="a" style="left:1463px;top:322px" width="28" height="28" viewBox="0 0 28 28"><rect x=".5" y=".5" width="27" height="27" fill="#fff" stroke="#222"/><rect x="0" y="0" width="28" height="4.5" fill="#000"/><rect x="1.5" y="1" width="3" height="3" fill="#fff"/><path d="M7 9 H21 L16 16 V23 L13 25 V16 Z" fill="#999" stroke="#555" stroke-width=".6"/><ellipse cx="14" cy="9.5" rx="7" ry="1.5" fill="#ccc" stroke="#666" stroke-width=".5"/></svg><svg class="a" style="left:1463px;top:368px" width="28" height="28" viewBox="0 0 28 28"><rect x=".5" y=".5" width="27" height="27" fill="#fff" stroke="#222"/><rect x="0" y="0" width="28" height="4.5" fill="#000"/><rect x="1.5" y="1" width="3" height="3" fill="#fff"/><path d="M8 10 L14 13 V20 L8 23 Z" fill="#eee" stroke="#555" stroke-width=".7"/><rect x="14" y="13" width="8" height="7" fill="#999" stroke="#555" stroke-width=".6"/><path d="M5 16.5 H24" stroke="#f88" stroke-width=".8" stroke-dasharray="2 1"/></svg><svg class="a" style="left:1463px;top:424px" width="28" height="28" viewBox="0 0 28 28"><rect x=".5" y=".5" width="27" height="27" fill="#fff" stroke="#222"/><rect x="0" y="0" width="28" height="4.5" fill="#000"/><rect x="1.5" y="1" width="3" height="3" fill="#fff"/><path d="M4 8 H18 M4 11 H16 M4 14 H19 M4 17 H17" stroke="#999" stroke-width=".8"/><rect x=".5" y="22" width="27" height="5.5" fill="#fff" stroke="#222" stroke-width=".6"/><path d="M3 25 H6 M10 25 H24" stroke="#777" stroke-width=".8"/></svg><svg class="a" style="left:1463px;top:471px" width="28" height="28" viewBox="0 0 28 28"><rect x=".5" y=".5" width="27" height="27" fill="#fff" stroke="#222"/><rect x="0" y="0" width="28" height="4.5" fill="#000"/><rect x="1.5" y="1" width="3" height="3" fill="#fff"/><rect x="8" y="8" width="13" height="16" rx="1" fill="#c3862a"/><rect x="10" y="10" width="9" height="12" fill="#f4f4f4"/><rect x="12" y="6.5" width="5" height="3" fill="#999"/><path d="M11 13 H18 M11 15 H18 M11 17 H18" stroke="#ccc" stroke-width=".6"/></svg>
</div></body></html>
